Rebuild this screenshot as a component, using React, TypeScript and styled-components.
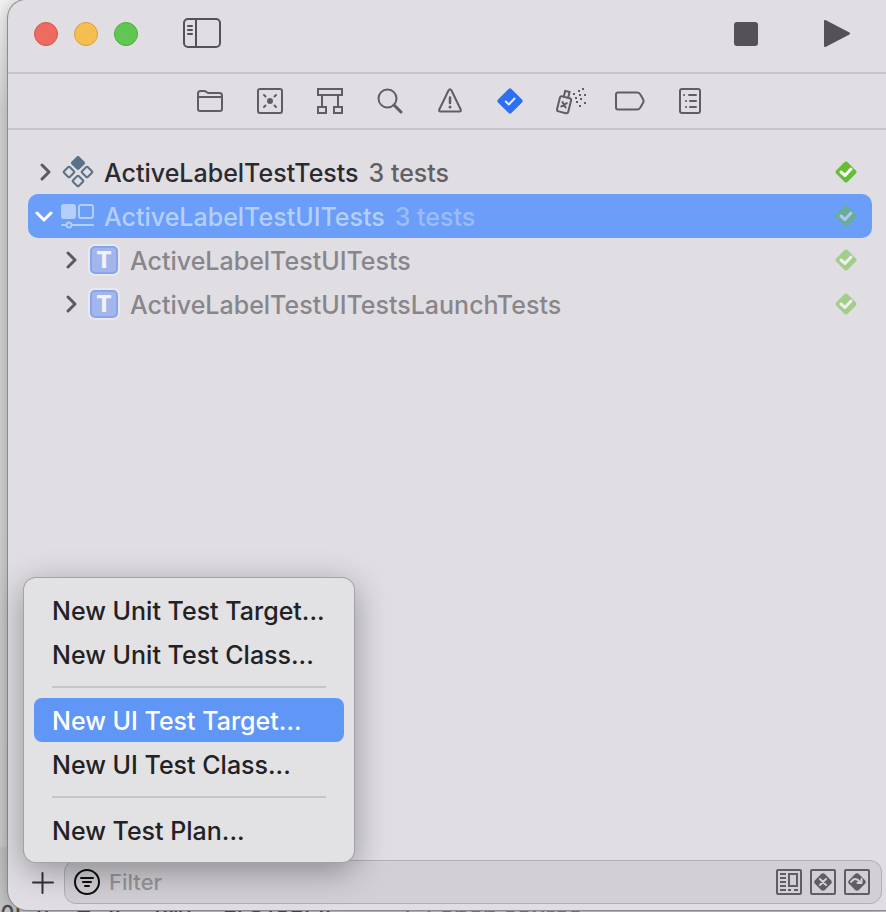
import React from "react";
import styled, { createGlobalStyle, css } from "styled-components";

const GlobalStyle = createGlobalStyle`
  * { box-sizing: border-box; }
  body {
    margin: 0;
    font-family: Inter, "Noto Sans CJK KR", sans-serif;
    font-size: 25px;
    font-weight: 450;
    line-height: 32px;
    color: #2b2a2e;
  }
  button, input { font: inherit; color: inherit; }
  svg { display: block; flex: none; }
`;

const Desktop = styled.div`
  display: flex;
  flex-direction: column;
  min-height: 100vh;
  overflow: hidden;
  background: linear-gradient(#f4f3f4, #d2d2d3 112px, #cfcfd0 846px, #c3c3c4 848px);
`;

const Window = styled.main`
  position: relative;
  z-index: 1;
  flex: 1;
  display: flex;
  flex-direction: column;
  margin-left: 8px;
  background: #e0dee3;
  border-radius: 18px 0 0 20px;
  box-shadow: 0 0 0 1px #8b8a8d, 0 0 16px rgba(0, 0, 0, 0.25);
`;

const BackgroundText = styled.div`
  display: flex;
  gap: 30px;
  height: 9px;
  margin-top: -7px;
  overflow: hidden;
  white-space: nowrap;
  font-size: 24px;
  line-height: 24px;
  color: #4c4c4e;
`;

const FadedText = styled.span`
  margin-left: 40px;
  color: #7c7c7e;
`;

const IconButton = styled.button`
  display: flex;
  align-items: center;
  justify-content: center;
  flex: none;
  padding: 0;
  border: 0;
  background: none;
  color: #605e63;
`;

const TitleBar = styled.header`
  display: flex;
  align-items: center;
  height: 74px;
  padding: 0 36px 4px 26px;
  border-bottom: 2px solid #c8c6cb;
  color: #545257;
  ${IconButton} { color: inherit; }
`;

const TrafficLights = styled.div`
  display: flex;
  gap: 16px;
  margin-right: 44px;
`;

const Light = styled.button<{ $fill: string; $edge: string }>`
  width: 24px;
  height: 24px;
  padding: 0;
  border-radius: 50%;
  border: 1px solid ${(p) => p.$edge};
  background: ${(p) => p.$fill};
`;

const RunControls = styled.div`
  display: flex;
  gap: 62px;
  margin-left: auto;
`;

const Navigators = styled.nav`
  display: flex;
  justify-content: center;
  gap: 20px;
  height: 56px;
  padding: 0 0 0 6px;
  border-bottom: 2px solid #c8c6cb;
  ${IconButton} { width: 40px; }
`;

const Tree = styled.ul`
  flex: 1;
  margin: 0;
  padding: 20px 14px 20px 20px;
  list-style: none;
`;

const Row = styled.li<{ $selected?: boolean; $child?: boolean; $muted?: boolean }>`
  display: flex;
  align-items: center;
  height: 44px;
  padding: 0 14px 0 ${(p) => (p.$child ? 31 : 5)}px;
  border-radius: 10px;
  color: ${(p) => (p.$muted ? "#88868b" : "#2b2a2e")};
  ${(p) => p.$selected && css`
    background: #6a9ef8;
    color: #b5cffb;
  `}
`;

const Disclosure = styled(IconButton)<{ $light?: boolean }>`
  width: 24px;
  height: 32px;
  color: ${(p) => (p.$light ? "#ffffff" : "#5c5a5f")};
`;

const RowIcon = styled.span`
  display: flex;
  justify-content: center;
  width: 42px;
  margin-right: 5px;
`;

const RowLabel = styled.span`
  padding-top: 2px;
  white-space: nowrap;
`;

const Count = styled.span<{ $light?: boolean }>`
  margin-left: 10px;
  color: ${(p) => (p.$light ? "#9abdf9" : "#626065")};
`;

const Status = styled.span<{ $opacity: number }>`
  margin-left: auto;
  opacity: ${(p) => p.$opacity};
`;

const Footer = styled.footer`
  position: relative;
  display: flex;
  align-items: center;
  padding: 0 4px 6px 20px;
`;

const FilterField = styled.label`
  flex: 1;
  display: flex;
  align-items: center;
  gap: 8px;
  height: 44px;
  margin-left: 8px;
  padding: 0 11px 0 8px;
  border: 1px solid #b1afb4;
  border-radius: 12px;
  background: #d2d0d5;
  color: #0f0e11;
`;

const FilterInput = styled.input`
  flex: 1;
  min-width: 0;
  padding: 0;
  border: 0;
  outline: 0;
  background: none;
  font-size: 22px;
  &::placeholder { color: #98969c; opacity: 1; }
`;

const Menu = styled.div`
  position: absolute;
  left: 16px;
  bottom: 48px;
  width: 330px;
  padding: 10px;
  border-radius: 12px;
  background: #e2e2e4;
  box-shadow: 0 0 0 1px #a3a2a6, 0 8px 34px rgba(0, 0, 0, 0.36);
`;

const MenuItem = styled.button<{ $active?: boolean }>`
  display: block;
  width: 100%;
  height: 44px;
  padding: 2px 18px 0;
  border: 0;
  border-radius: 8px;
  text-align: left;
  white-space: nowrap;
  background: ${(p) => (p.$active ? "#6096f6" : "transparent")};
  color: ${(p) => (p.$active ? "#ffffff" : "#222123")};
`;

const Separator = styled.hr`
  height: 2px;
  margin: 10px 18px;
  border: 0;
  background: #c6c6c8;
`;

type DrawingProps = { w: number; h: number; sw?: number; children: React.ReactNode };

function Drawing({ w, h, sw = 2, children }: DrawingProps) {
  return (
    <svg width={w} height={h} viewBox={`0 0 ${w} ${h}`} fill="none" stroke="currentColor"
      strokeWidth={sw} strokeLinejoin="round" strokeLinecap="round" aria-hidden="true">
      {children}
    </svg>
  );
}

const spray = [
  [18, 6], [23, 3], [27, 1], [20, 10], [24, 7], [29, 7], [25, 11], [29, 15], [21, 14], [24, 18],
];

const navigators = [
  { name: "Project", icon: (
    <Drawing w={28} h={28}>
      <path d="M2 22V6.500Q2 4 4.500 4H8Q9.500 4 10.500 5L12 6H23.500Q26 6 26 8.500V22Q26 24 24 24H4Q2 24 2 22ZM2 10H26" />
    </Drawing>) },
  { name: "Source Control", icon: (
    <Drawing w={28} h={28}>
      <rect x="2" y="2" width="24" height="24" rx="2" />
      <circle cx="14" cy="14" r="3" fill="currentColor" stroke="none" />
      <path d="M8 8L9.500 9.500M20 8L18.500 9.500M8 20L9.500 18.500M20 20L18.500 18.500" />
    </Drawing>) },
  { name: "Symbols", icon: (
    <Drawing w={28} h={28}>
      <path d="M2 2H26V8H2ZM6 8V20M22 8V20M2 20H10V26H2ZM18 20H26V26H18Z" strokeLinejoin="miter" />
    </Drawing>) },
  { name: "Find", icon: (
    <Drawing w={28} h={28}>
      <circle cx="11.500" cy="11.500" r="9" />
      <path d="M18 18L25 25" strokeWidth="3" />
    </Drawing>) },
  { name: "Issues", icon: (
    <Drawing w={28} h={28}>
      <path d="M12.500 3.500Q14 1 15.500 3.500L24.700 22.500Q25.500 24.500 23.500 24.500H4.500Q2.500 24.500 3.300 22.500Z" />
      <path d="M14 10.500V16" strokeWidth="2.500" />
      <circle cx="14" cy="20" r="1.500" fill="currentColor" stroke="none" />
    </Drawing>) },
  { name: "Tests", icon: (
    <Drawing w={28} h={28}>
      <rect x="4.500" y="4.500" width="19" height="19" rx="2" transform="rotate(45 14 14)" fill="#2f70f2" stroke="none" />
      <path d="M9.800 14.500L12.800 17.500L18.500 11.500" stroke="#e4ebfb" />
    </Drawing>) },
  { name: "Debug", icon: (
    <Drawing w={32} h={28}>
      <g transform="rotate(14 10 17)">
        <rect x="4.500" y="10" width="11.500" height="15.500" rx="2" />
        <path d="M8 10V4H12.500V10" strokeLinejoin="miter" />
        <path d="M8 15.500L12.500 20M12.500 15.500L8 20" />
      </g>
      {spray.map(([x, y]) => (
        <rect key={`${x}-${y}`} x={x + 1} y={y} width="2" height="2" fill="currentColor" stroke="none" />
      ))}
    </Drawing>) },
  { name: "Breakpoints", icon: (
    <Drawing w={30} h={28}>
      <path d="M3 5.500H22Q24 5.500 25 7L28 12Q29 14 28 16L25 21Q24 22.500 22 22.500H3Q1 22.500 1 20.500V7.500Q1 5.500 3 5.500Z" />
    </Drawing>) },
  { name: "Reports", icon: (
    <Drawing w={28} h={28}>
      <rect x="4" y="2" width="20" height="24" rx="2" />
      <path d="M13 8H20M14 14H20M14 20H20" />
      <path d="M8 8H8.100M10 14H10.100M10 20H10.100" />
    </Drawing>) },
];

function Chevron({ open }: { open?: boolean }) {
  return (
    <Drawing w={20} h={20} sw={3}>
      <path d={open ? "M2 7L9 14L16 7" : "M7 3L14 10L7 17"} />
    </Drawing>
  );
}

const UnitTargetIcon = () => (
  <svg width="32" height="32" viewBox="0 0 32 32" fill="none" stroke="#5a7287" strokeWidth="2" aria-hidden="true">
    <rect x="11.500" y="2.500" width="9" height="9" rx="1" transform="rotate(45 16 7)" fill="#5a7287" />
    <rect x="3" y="12" width="8" height="8" rx="1" transform="rotate(45 7 16)" />
    <rect x="21" y="12" width="8" height="8" rx="1" transform="rotate(45 25 16)" />
    <rect x="12" y="21" width="8" height="8" rx="1" transform="rotate(45 16 25)" />
  </svg>
);

const UITargetIcon = () => (
  <Drawing w={34} h={26}>
    <rect x="0" y="1" width="15" height="15" rx="3" fill="currentColor" stroke="none" />
    <rect x="18" y="2" width="14" height="13" rx="2" />
    <path d="M1 22H5M11 22H32" />
    <circle cx="8" cy="22" r="2.500" />
  </Drawing>
);

const TestClassBadge = styled.span`
  display: flex;
  align-items: center;
  justify-content: center;
  width: 28px;
  height: 28px;
  border: 2px solid #86a5ea;
  border-radius: 5px;
  background: #a2b5ec;
  box-shadow: 0 0 0 2px #eae8ed;
  color: #f2f1f6;
  font-size: 23px;
  line-height: 24px;
  font-weight: 800;
`;

function PassedIcon({ tick = "#ffffff" }: { tick?: string }) {
  return (
    <Drawing w={24} h={24} sw={3}>
      <rect x="4" y="4" width="16" height="16" rx="2" transform="rotate(45 12 12)" fill="#65be36" stroke="none" />
      <path d="M7 12L11 15.500L17 9" stroke={tick} />
    </Drawing>
  );
}

const App = () => (
  <>
    <GlobalStyle />
    <Desktop>
      <Window>
        <TitleBar>
          <TrafficLights>
            <Light $fill="#ed6b60" $edge="#d3564b" aria-label="Close" />
            <Light $fill="#f5bf4f" $edge="#d8a13c" aria-label="Minimize" />
            <Light $fill="#61c654" $edge="#4dac40" aria-label="Zoom" />
          </TrafficLights>
          <IconButton aria-label="Toggle navigator">
            <Drawing w={40} h={32}>
              <rect x="2" y="1" width="36" height="28" rx="4" />
              <path d="M14 1V29M6 8H10M6 12H10M6 16H10" />
            </Drawing>
          </IconButton>
          <RunControls>
            <IconButton aria-label="Stop">
              <Drawing w={28} h={28}>
                <rect x="2" y="2" width="24" height="24" rx="3" fill="currentColor" stroke="none" />
              </Drawing>
            </IconButton>
            <IconButton aria-label="Run">
              <Drawing w={28} h={28}>
                <path d="M3 1V26L27 13.500Z" fill="currentColor" />
              </Drawing>
            </IconButton>
          </RunControls>
        </TitleBar>
        <Navigators aria-label="Navigators">
          {navigators.map(({ name, icon }) => (
            <IconButton key={name} aria-label={name}>{icon}</IconButton>
          ))}
        </Navigators>
        <Tree>
          <Row>
            <Disclosure aria-label="Expand ActiveLabelTestTests"><Chevron /></Disclosure>
            <RowIcon><UnitTargetIcon /></RowIcon>
            <RowLabel>ActiveLabelTestTests<Count>3 tests</Count></RowLabel>
            <Status $opacity={1}><PassedIcon /></Status>
          </Row>
          <Row $selected>
            <Disclosure $light aria-label="Collapse ActiveLabelTestUITests"><Chevron open /></Disclosure>
            <RowIcon><UITargetIcon /></RowIcon>
            <RowLabel>ActiveLabelTestUITests<Count $light>3 tests</Count></RowLabel>
            <Status $opacity={0.5}><PassedIcon tick="#ffe9ff" /></Status>
          </Row>
          {["ActiveLabelTestUITests", "ActiveLabelTestUITestsLaunchTests"].map((name) => (
            <Row key={name} $child $muted>
              <Disclosure aria-label={`Expand ${name}`}><Chevron /></Disclosure>
              <RowIcon><TestClassBadge>T</TestClassBadge></RowIcon>
              <RowLabel>{name}</RowLabel>
              <Status $opacity={0.5}><PassedIcon /></Status>
            </Row>
          ))}
        </Tree>
        <Footer>
          <IconButton aria-label="Add">
            <Drawing w={28} h={28}><path d="M5 14.500H25M14.500 5V25" stroke="#333236" /></Drawing>
          </IconButton>
          <FilterField>
            <Drawing w={28} h={28}>
              <circle cx="14" cy="14" r="12" />
              <path d="M8 10H20M10 14H18M12 18H16" />
            </Drawing>
            <FilterInput type="text" placeholder="Filter" aria-label="Filter" />
            <IconButton aria-label="Show tests in current scheme">
              <Drawing w={26} h={26}>
                <rect x="1" y="1" width="24" height="24" rx="1" />
                <rect x="13" y="5" width="8" height="12" strokeLinejoin="miter" />
                <path d="M4 5H10M4 9H10M4 13H10M4 17H10M4 21H10M12 21H15M18 21H22" strokeLinecap="butt" />
              </Drawing>
            </IconButton>
            <IconButton aria-label="Show only failing tests">
              <Drawing w={26} h={26}>
                <rect x="1" y="1" width="24" height="24" rx="1" />
                <rect x="6" y="6" width="14" height="14" rx="3" transform="rotate(45 13 13)" fill="currentColor" stroke="none" />
                <path d="M10 10L16 16M16 10L10 16" stroke="#d2d0d5" />
              </Drawing>
            </IconButton>
            <IconButton aria-label="Show only skipped tests">
              <Drawing w={26} h={26}>
                <rect x="1" y="1" width="24" height="24" rx="1" />
                <rect x="6" y="6" width="14" height="14" rx="3" transform="rotate(45 13 13)" fill="currentColor" stroke="none" />
                <path d="M7 13Q11 7 16 13M17.500 10V14H13.500" stroke="#d2d0d5" />
              </Drawing>
            </IconButton>
          </FilterField>
          <Menu role="menu">
            <MenuItem role="menuitem">New Unit Test Target...</MenuItem>
            <MenuItem role="menuitem">New Unit Test Class...</MenuItem>
            <Separator />
            <MenuItem role="menuitem" $active>New UI Test Target...</MenuItem>
            <MenuItem role="menuitem">New UI Test Class...</MenuItem>
            <Separator />
            <MenuItem role="menuitem">New Test Plan...</MenuItem>
          </Menu>
        </Footer>
      </Window>
      <BackgroundText aria-hidden="true">
        <span>이 기능은 가</span>
        <span>(앱)</span>
        <span>바운더리가</span>
        <FadedText>(–) open source</FadedText>
      </BackgroundText>
    </Desktop>
  </>
);

export default App;
